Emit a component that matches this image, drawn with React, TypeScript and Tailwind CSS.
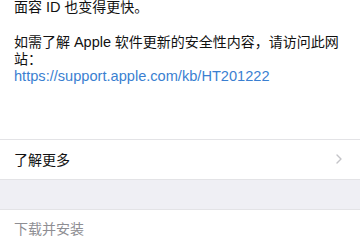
export default function App() {
  const font = { fontFamily: '"Liberation Sans", "Noto Sans CJK SC", sans-serif' };
  return (
    <div className="w-[360px] h-[240px] overflow-hidden bg-white" style={font}>
      <div className="px-[14px] text-[14px] leading-[17px] text-[#111]">
        <p className="-mt-[1px]">面容 <span className="text-[14.5px]">ID</span> 也变得更快。</p>
        <p className="mt-[18px]">如需了解 <span className="text-[14.5px]">Apple</span> 软件更新的安全性内容，请访问此网站：</p>
        <p className="text-[#3a7fd1] text-[14.6px]">https://support.apple.com/kb/HT201222</p>
      </div>
      <div className="mt-[54px] border-t border-[#e3e3e6] bg-white">
        <div className="h-[39px] pl-[14px] pr-[18px] flex items-center justify-between">
          <span className="text-[14px] text-[#111] pt-[2px]">了解更多</span>
          <svg width="6" height="10" viewBox="0 0 6 10" className="mt-[-2px]">
            <path d="M1 1 L5 5 L1 9" fill="none" stroke="#c4c4c8" strokeWidth="1.4" strokeLinecap="round" strokeLinejoin="round" />
          </svg>
        </div>
      </div>
      <div className="h-[31px] bg-[#efeff4] border-y border-[#e3e3e6]" />
      <div className="h-[40px] pl-[14px] flex items-center">
        <span className="text-[14px] text-[#8e8e93] -mt-[1px]">下载并安装</span>
      </div>
    </div>
  );
}
